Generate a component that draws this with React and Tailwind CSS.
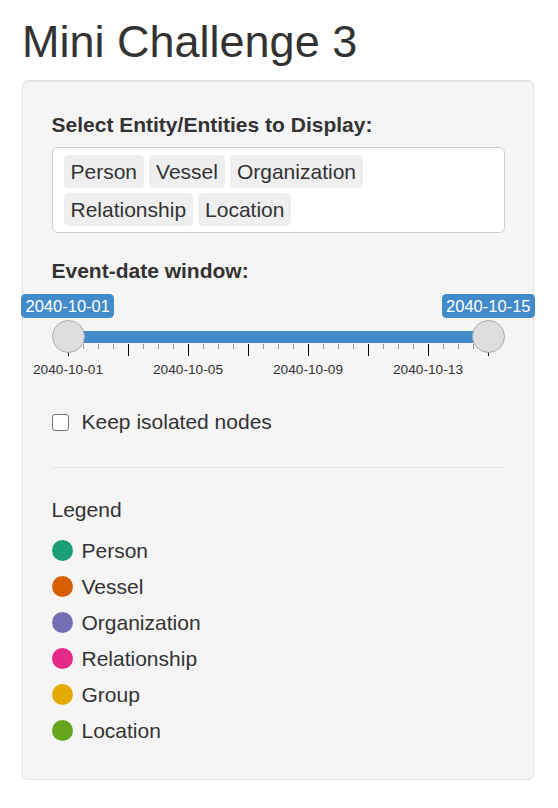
import React from 'react';

const chips = ['Person', 'Vessel', 'Organization', 'Relationship', 'Location'];

const legend = [
  { name: 'Person', color: 'bg-[#1b9e77]' },
  { name: 'Vessel', color: 'bg-[#d95f02]' },
  { name: 'Organization', color: 'bg-[#7570b3]' },
  { name: 'Relationship', color: 'bg-[#e7298a]' },
  { name: 'Group', color: 'bg-[#e6ab02]' },
  { name: 'Location', color: 'bg-[#66a61e]' },
];

// 14 days over the track, 15px per grid step (4 steps per 2 days)
const ticks = Array.from({ length: 29 }, (_, i) => i);
const gridLabels = ['2040-10-01', '2040-10-05', '2040-10-09', '2040-10-13'];

const Handle = () => (
  <div className="w-[33px] h-[33px] shrink-0 rounded-full bg-[#dedede] border border-[#ababab] relative z-10" />
);

const Tooltip = ({ children }) => (
  <div className="h-[24px] px-[4.5px] rounded-[4.5px] bg-[#428bca] text-white text-[16.5px] leading-[24px] whitespace-nowrap">
    {children}
  </div>
);

const RangeSlider = () => (
  <div className="h-[99px] pt-[1px]">
    {/* value tooltips, overhanging the track ends */}
    <div className="flex justify-between -mx-[30.5px]">
      <Tooltip>2040-10-01</Tooltip>
      <Tooltip>2040-10-15</Tooltip>
    </div>

    {/* handles with the bar between them */}
    <div className="mt-[2px] flex items-center">
      <Handle />
      <div className="flex-1 h-[12px] bg-[#428bca] -mx-[16.5px]" />
      <Handle />
    </div>

    {/* grid ticks */}
    <div className="-mt-[9px] ml-[16px] flex items-start">
      {ticks.map((i) => (
        <div key={i} className="w-[15px] shrink-0">
          <div className={i % 4 === 0 ? 'h-[12px] w-[1.5px] bg-black' : 'h-[4.5px] w-[1px] bg-[#999]'} />
        </div>
      ))}
    </div>

    {/* grid labels */}
    <div className="mt-[5.5px] -ml-[43.5px] flex">
      {gridLabels.map((label) => (
        <div key={label} className="w-[120px] shrink-0 text-center text-[13.7px] leading-[15px] text-[#333]">
          {label}
        </div>
      ))}
    </div>
  </div>
);

export default function App() {
  return (
    <div className="min-h-screen bg-white px-[22px] font-['Liberation_Sans',Arial,sans-serif] text-[#333]">
      <h2 className="pt-[17px] mb-[13.5px] text-[45px] leading-[49.5px] font-normal">Mini Challenge 3</h2>

      <div className="w-[512px] rounded-[6px] border border-[#e3e3e3] bg-[#f5f5f5] px-[28.5px] pt-[28.5px] pb-[30.5px] shadow-[inset_0_1px_1px_rgba(0,0,0,0.05)]">
        {/* entity selector */}
        <div className="mb-[22.5px]">
          <label className="block mb-[7.5px] text-[21px] leading-[30px] font-bold">Select Entity/Entities to Display:</label>
          <div className="flex flex-wrap gap-[5px] rounded-[6px] border border-[#ccc] bg-white pl-[11px] pr-[11px] pt-[7px] pb-[6px]">
            {chips.map((c) => (
              <span key={c} className="h-[33px] px-[7px] rounded-[4.5px] bg-[#efefef] text-[21px] leading-[33px]">
                {c}
              </span>
            ))}
          </div>
        </div>

        {/* date window */}
        <label className="block mb-[7.5px] text-[21px] leading-[30px] font-bold">Event-date window:</label>
        <RangeSlider />

        {/* isolated nodes */}
        <label className="mt-[15px] flex items-center gap-[12.5px] h-[30px] text-[21px] leading-[30px]">
          <span className="ml-[0.5px] w-[17px] h-[17px] rounded-[3px] border-[1.5px] border-[#767676] bg-white" />
          Keep isolated nodes
        </label>

        <hr className="mt-[30px] border-0 border-t border-[#e6e6e6]" />

        {/* legend */}
        <div className="mt-[27px] text-[21px] leading-[30px]">Legend</div>
        <div className="mt-[7.5px] flex flex-col">
          {legend.map((l) => (
            <div key={l.name} className="h-[36px] flex items-center gap-[9px] text-[21px]">
              <span className={`w-[21px] h-[21px] rounded-full ${l.color}`} />
              {l.name}
            </div>
          ))}
        </div>
      </div>
    </div>
  );
}
